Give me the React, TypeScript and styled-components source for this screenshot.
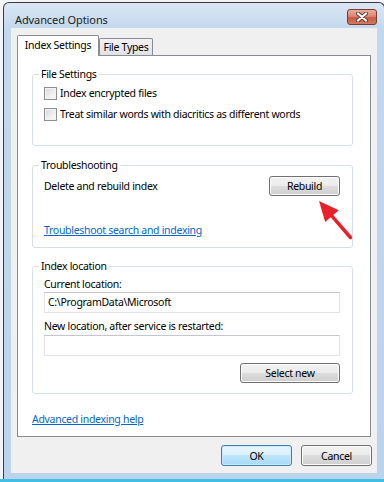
import React from "react";
import styled, { createGlobalStyle } from "styled-components";

const GlobalStyle = createGlobalStyle`
    body {
        margin: 0;
        font-family: "Noto Sans", "Liberation Sans", sans-serif;
        font-size: 10.5px;
        letter-spacing: -0.3px;
        color: #000;
    }
`;

const Page = styled.div`
    position: relative;
    width: 384px;
    height: 482px;
    overflow: hidden;
    background: #f2f4f7;
    display: flex;
    flex-direction: column;
`;

const Window = styled.div`
    margin: 2px 0 0 3px;
    width: 382px;
    height: 477px;
    flex: none;
    box-sizing: border-box;
    border: 1px solid #3a3d42;
    border-bottom: none;
    border-radius: 6px 6px 0 0;
    background: linear-gradient(#dae7f5 0px, #c3d8ee 26px, #bcd3ec 100%);
    display: flex;
    flex-direction: column;
    padding: 0 7px 6px 7px;
`;

const TitleBar = styled.div`
    height: 25px;
    display: flex;
    align-items: flex-start;
    justify-content: space-between;
`;

const Title = styled.div`
    padding: 9px 0 0 4px;
    font-size: 11px;
    letter-spacing: -0.1px;
    line-height: 15px;
    color: #1b1b1b;
`;

const CloseButton = styled.div`
    margin-top: 6px;
    width: 30px;
    height: 16px;
    box-sizing: border-box;
    border: 1px solid #7a3b33;
    border-radius: 3px;
    background: linear-gradient(#ebab9c 0%, #dd8673 45%, #c95b44 55%, #d27a5f 100%);
    display: flex;
    align-items: center;
    justify-content: center;
`;

const Client = styled.div`
    flex: 1;
    background: #f0f0f0;
    display: flex;
    flex-direction: column;
`;

const TabStrip = styled.div`
    margin-top: 7px;
    padding-left: 6px;
    display: flex;
    align-items: flex-end;
    position: relative;
    z-index: 1;
`;

const Tab = styled.div<{ $active?: boolean; $width: number }>`
    width: ${(p) => p.$width}px;
    height: ${(p) => (p.$active ? 21 : 17)}px;
    margin-bottom: ${(p) => (p.$active ? -1 : 0)}px;
    box-sizing: border-box;
    border: 1px solid #898c95;
    border-bottom: none;
    border-radius: 2px 2px 0 0;
    background: ${(p) => (p.$active ? "#fff" : "linear-gradient(#f3f3f3, #e2e2e2)")};
    display: flex;
    align-items: ${(p) => (p.$active ? "flex-start" : "center")};
    padding-top: ${(p) => (p.$active ? 2 : 1)}px;
    justify-content: center;
    line-height: 15px;
`;

const Panel = styled.div`
    margin: 0 6px;
    height: 382px;
    box-sizing: border-box;
    border: 1px solid #898c95;
    background: #fff;
    padding: 0 17px 0 14px;
    display: flex;
    flex-direction: column;
`;

const Group = styled.fieldset<{ $top: number; $bottom: number }>`
    margin: ${(p) => p.$top}px 0 0 0;
    padding: 0 12px ${(p) => p.$bottom}px 11px;
    border: 1px solid #d5dfe5;
    border-radius: 3px;
    min-width: 0;
    display: flex;
    flex-direction: column;
`;

const Legend = styled.legend`
    margin-left: -5px;
    padding: 0 2px;
    line-height: 14px;
`;

const CheckRow = styled.label<{ $top: number }>`
    margin-top: ${(p) => p.$top}px;
    display: flex;
    align-items: center;
    height: 16px;
    gap: 3px;
`;

const CheckBox = styled.span`
    width: 13px;
    height: 13px;
    box-sizing: border-box;
    border: 1px solid #8f8f8f;
    background: linear-gradient(135deg, #d8d8d8 0%, #f4f4f4 70%, #fbfbfb 100%);
    box-shadow: inset 0 0 0 1px #f4f4f4;
    flex: none;
`;

const Row = styled.div<{ $top: number }>`
    margin-top: ${(p) => p.$top}px;
    display: flex;
    align-items: center;
    justify-content: space-between;
`;

const Text = styled.div<{ $top?: number }>`
    margin-top: ${(p) => p.$top || 0}px;
    line-height: 16px;
    height: 16px;
`;

const Link = styled.a<{ $top: number }>`
    margin-top: ${(p) => p.$top}px;
    align-self: flex-start;
    line-height: 16px;
    color: #0066cc;
    text-decoration: underline;
    cursor: pointer;
`;

const Button = styled.button<{ $width: number; $height?: number; $default?: boolean }>`
    width: ${(p) => p.$width}px;
    height: ${(p) => p.$height || 20}px;
    margin: 0;
    padding: 0;
    font-family: inherit;
    font-size: inherit;
    letter-spacing: inherit;
    color: #000;
    border: 1px solid ${(p) => (p.$default ? "#3c7fb1" : "#707070")};
    border-radius: 3px;
    background: ${(p) =>
        p.$default
            ? "linear-gradient(#eaf6fd 0%, #d9f0fc 50%, #bee6fd 50%, #a7d9f5 100%)"
            : "linear-gradient(#f2f2f2 0%, #ebebeb 50%, #dddddd 50%, #cfcfcf 100%)"};
    box-shadow: inset 0 0 0 1px ${(p) => (p.$default ? "#c8eafc" : "#fcfcfc")};
    flex: none;
`;

const Input = styled.div<{ $top: number }>`
    margin-top: ${(p) => p.$top}px;
    height: 21px;
    box-sizing: border-box;
    border: 1px solid #e2e3ea;
    border-top-color: #c3c6cd;
    background: #fff;
    padding-left: 3px;
    line-height: 19px;
`;

const RightRow = styled.div<{ $top: number }>`
    margin-top: ${(p) => p.$top}px;
    display: flex;
    justify-content: flex-end;
`;

const Footer = styled.div`
    margin-top: 8px;
    padding-right: 5px;
    display: flex;
    justify-content: flex-end;
    gap: 9px;
`;

const BottomStrip = styled.div`
    height: 3px;
    flex: none;
    background: #3fbfe6;
`;

const Arrow = styled.svg`
    position: absolute;
    left: 300px;
    top: 195px;
    z-index: 5;
`;

const CloseIcon = () => (
    <svg width="12" height="10" viewBox="0 0 12 10">
        <path d="M2 1.5 L10 8.5 M10 1.5 L2 8.5" stroke="#5a3a36" strokeWidth="4" strokeLinecap="round" />
        <path d="M2 1.5 L10 8.5 M10 1.5 L2 8.5" stroke="#ffffff" strokeWidth="2.2" strokeLinecap="round" />
    </svg>
);

const RedArrow = () => (
    <Arrow width="56" height="46" viewBox="0 0 56 46">
        <path d="M32 21.2 L50.5 42.5" stroke="#e8202a" strokeWidth="3.5" strokeLinecap="round" />
        <polygon points="19,6 38.8,15.3 25.2,27.1" fill="#e8202a" />
    </Arrow>
);

const App = () => {
    return (
        <Page>
            <GlobalStyle />
            <Window>
                <TitleBar>
                    <Title>Advanced Options</Title>
                    <CloseButton>
                        <CloseIcon />
                    </CloseButton>
                </TitleBar>
                <Client>
                    <TabStrip>
                        <Tab $active $width={82}>Index Settings</Tab>
                        <Tab $width={54}>File Types</Tab>
                    </TabStrip>
                    <Panel>
                        <Group $top={11} $bottom={23}>
                            <Legend>File Settings</Legend>
                            <CheckRow $top={4}>
                                <CheckBox />
                                Index encrypted files
                            </CheckRow>
                            <CheckRow $top={5}>
                                <CheckBox />
                                Treat similar words with diacritics as different words
                            </CheckRow>
                        </Group>
                        <Group $top={12} $bottom={9}>
                            <Legend>Troubleshooting</Legend>
                            <Row $top={4}>
                                <Text>Delete and rebuild index</Text>
                                <Button $width={71}>Rebuild</Button>
                            </Row>
                            <Link $top={26}>Troubleshoot search and indexing</Link>
                        </Group>
                        <Group $top={11} $bottom={10}>
                            <Legend>Index location</Legend>
                            <Text $top={3}>Current location:</Text>
                            <Input $top={0}>C:\ProgramData\Microsoft</Input>
                            <Text $top={5}>New location, after service is restarted:</Text>
                            <Input $top={1} />
                            <RightRow $top={7}>
                                <Button $width={100}>Select new</Button>
                            </RightRow>
                        </Group>
                        <Link $top={17}>Advanced indexing help</Link>
                    </Panel>
                    <Footer>
                        <Button $width={71} $height={21} $default>
                            OK
                        </Button>
                        <Button $width={71} $height={21}>
                            Cancel
                        </Button>
                    </Footer>
                </Client>
            </Window>
            <BottomStrip />
            <RedArrow />
        </Page>
    );
};

export default App;
